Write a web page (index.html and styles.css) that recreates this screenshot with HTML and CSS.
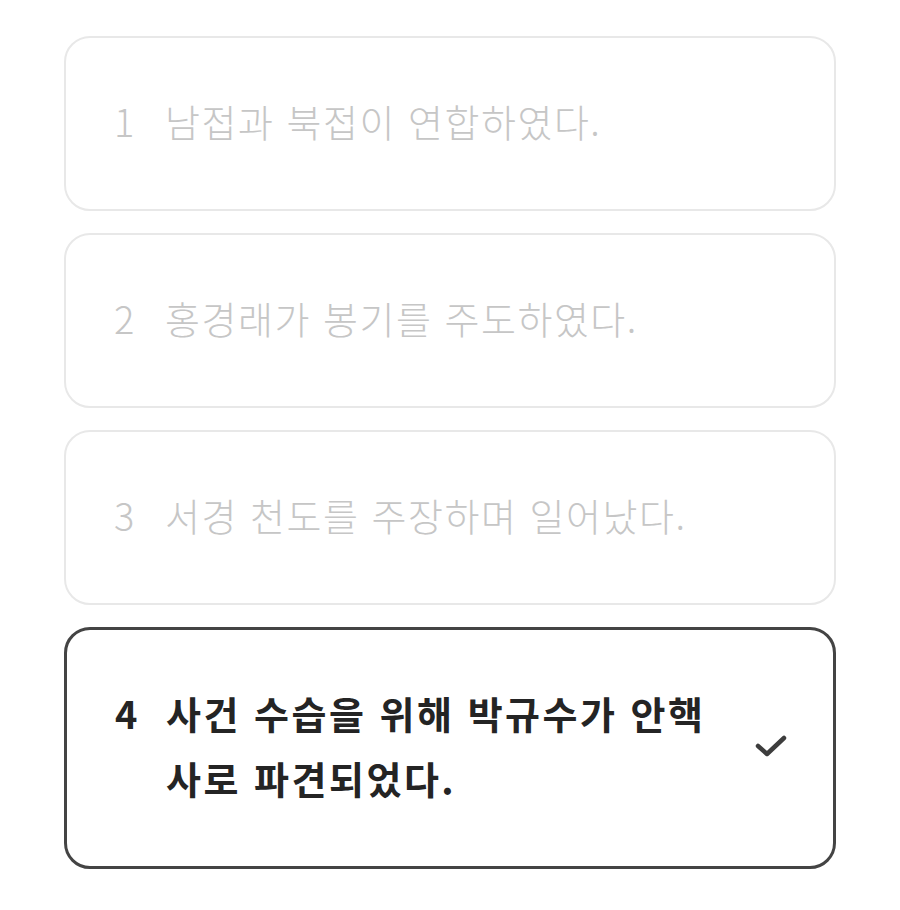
FILE: index.html
```html
<!DOCTYPE html>
<html lang="ko">
<head>
    <meta charset="UTF-8">
    <meta name="viewport" content="width=device-width, initial-scale=1.0">
    <title>보기 선택</title>
    <link rel="stylesheet" href="styles.css">
</head>
<body>
    <div class="container">
        <ul class="choices">
            <li class="choice">
                <span class="choice-num">1</span>
                <span class="choice-text">남접과 북접이 연합하였다.</span>
            </li>
            <li class="choice">
                <span class="choice-num">2</span>
                <span class="choice-text">홍경래가 봉기를 주도하였다.</span>
            </li>
            <li class="choice">
                <span class="choice-num">3</span>
                <span class="choice-text">서경 천도를 주장하며 일어났다.</span>
            </li>
            <li class="choice selected">
                <span class="choice-num">4</span>
                <span class="choice-text">사건 수습을 위해 박규수가 안핵사로 파견되었다.</span>
                <svg class="check" viewBox="0 0 32 24" width="32" height="24">
                    <path d="M3 12 L12 20 L29 4" fill="none" stroke="#3d3d3d" stroke-width="4.5" stroke-linecap="round" stroke-linejoin="round"/>
                </svg>
            </li>
        </ul>
    </div>
</body>
</html>
```

FILE: styles.css
```css
* {
    margin: 0;
    padding: 0;
    box-sizing: border-box;
}

body {
    background-color: #ffffff;
    font-family: "Noto Sans CJK KR", "Noto Sans", sans-serif;
}

.container {
    padding: 36px 64px 0 64px;
}

.choices {
    list-style: none;
    display: flex;
    flex-direction: column;
    gap: 22px;
}

.choice {
    display: flex;
    align-items: flex-start;
    padding: 50px 46px 56px 46px;
    border: 2px solid #e8e8e8;
    border-radius: 26px;
    color: #c6c6c6;
    font-size: 38px;
    font-weight: 300;
    line-height: 65px;
    letter-spacing: 1.5px;
}

.choice-num {
    width: 53px;
    flex-shrink: 0;
    padding-left: 2px;
}

.choice-text {
    flex: 1;
    word-break: break-all;
}

.selected {
    border: 3px solid #444444;
    color: #242424;
    font-weight: 700;
    letter-spacing: 2.5px;
}

.check {
    align-self: center;
    flex-shrink: 0;
    margin-left: 32px;
    margin-top: 2px;
}
```
